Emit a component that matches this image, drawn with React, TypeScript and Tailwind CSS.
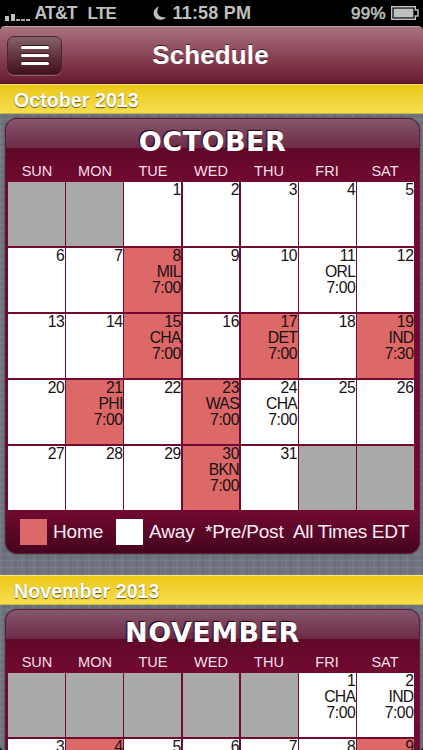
import clsx from "clsx";

type Cell = {
  day?: number;
  team?: string;
  time?: string;
  home?: boolean;
};

type Month = {
  label: string;
  title: string;
  cells: Cell[];
};

const WEEKDAYS = ["SUN", "MON", "TUE", "WED", "THU", "FRI", "SAT"];

const buildCells = (
  offset: number,
  days: number,
  games: Record<number, Omit<Cell, "day">>,
  weeks: number,
): Cell[] =>
  Array.from({ length: weeks * 7 }, (_, i) => {
    const day = i - offset + 1;
    return day < 1 || day > days ? {} : { day, ...games[day] };
  });

const MONTHS: Month[] = [
  {
    label: "October 2013",
    title: "OCTOBER",
    cells: buildCells(
      2,
      31,
      {
        8: { team: "MIL", time: "7:00", home: true },
        11: { team: "ORL", time: "7:00" },
        15: { team: "CHA", time: "7:00", home: true },
        17: { team: "DET", time: "7:00", home: true },
        19: { team: "IND", time: "7:30", home: true },
        21: { team: "PHI", time: "7:00", home: true },
        23: { team: "WAS", time: "7:00", home: true },
        24: { team: "CHA", time: "7:00" },
        30: { team: "BKN", time: "7:00", home: true },
      },
      5,
    ),
  },
  {
    label: "November 2013",
    title: "NOVEMBER",
    // only the first two weeks reach the screen
    cells: buildCells(
      5,
      30,
      {
        1: { team: "CHA", time: "7:00" },
        2: { team: "IND", time: "7:00" },
        4: { home: true },
        9: { home: true },
      },
      2,
    ),
  },
];

function StatusBar() {
  return (
    <div className="flex h-[26px] shrink-0 items-center bg-black pt-px text-[18px] leading-[25px] font-bold text-[#bfbfbf]">
      <div className="mb-[-3px] ml-[5px] flex h-[14px] items-end gap-[1.5px] pb-[1px]">
        <span className="h-[5px] w-[4px] bg-[#bfbfbf]" />
        <span className="h-[7px] w-[4px] bg-[#bfbfbf]" />
        <span className="h-[2px] w-[3.5px] bg-[#a8a8a8]" />
        <span className="h-[2px] w-[3.5px] bg-[#a8a8a8]" />
        <span className="h-[2px] w-[3.5px] bg-[#a8a8a8]" />
      </div>
      <span className="ml-[5px] w-[53px] text-[17.5px] tracking-[-0.8px]">AT&amp;T</span>
      <span className="w-[29px] text-[17px] tracking-[-0.7px]">LTE</span>
      <svg className="ml-[36px]" width="15" height="15" viewBox="0 0 15 15">
        <path d="M6 .5C1.5 2-.5 6 1.2 10c1.7 4 7.500 5.500 12.300 1.200C9 12 5.500 10.500 4.600 7.300 4 5 4.600 2.300 6 .5Z" fill="#bfbfbf" />
      </svg>
      <span className="ml-[5px] tracking-[0.2px] whitespace-nowrap">11:58 PM</span>
      <span className="mr-[5px] ml-auto text-[17px] font-normal tracking-[0.3px] [-webkit-text-stroke:0.6px_#bfbfbf]">99%</span>
      <svg className="mr-[4px] mb-[2px]" width="28" height="14" viewBox="0 0 28 14">
        <path d="M.7.7h23.600v3.300h2.700v6h-2.700v3.300H.7Z" fill="none" stroke="#bfbfbf" strokeWidth="1.400" />
        <rect x="2.600" y="2.600" width="19.800" height="8.800" fill="#bfbfbf" />
      </svg>
    </div>
  );
}

function NavBar() {
  return (
    <header className="relative flex h-[58px] shrink-0 items-start justify-center rounded-t-[5px] border-t border-b border-t-[#bba0aa] border-b-[#4a1426] bg-linear-to-b from-[#a9717f] to-[#68182f]">
      <button
        type="button"
        aria-label="Menu"
        className="absolute top-[9px] left-[7px] flex h-[39px] w-[55px] flex-col items-center justify-center gap-[5px] rounded-[7px] border border-[#4c2430] bg-linear-to-b from-[#83636b] via-[#63353f] to-[#411020] shadow-[0_1px_0_rgba(255,255,255,0.25)]"
      >
        <span className="h-[3px] w-[28px] rounded-full bg-white shadow-[0_-1px_0_#3a1620]" />
        <span className="h-[3px] w-[28px] rounded-full bg-white shadow-[0_-1px_0_#3a1620]" />
        <span className="h-[3px] w-[28px] rounded-full bg-white shadow-[0_-1px_0_#3a1620]" />
      </button>
      <h1 className="mr-[2px] text-[26px] leading-[57px] font-bold tracking-[0.1px] text-white [text-shadow:0_-1px_0_#4a1a28]">
        Schedule
      </h1>
    </header>
  );
}

function DayCell({ cell }: { cell: Cell }) {
  return (
    <div
      className={clsx(
        "h-[64px] pr-[0.5px] text-right text-[15.75px] leading-[16px] tracking-[-0.45px] text-[#171214]",
        !cell.day ? "bg-[#a9a9a9]" : cell.home ? "bg-[#dc6868]" : "bg-white",
      )}
    >
      <div className="-mt-[0.5px]">{cell.day}</div>
      <div className="tracking-[-0.7px]">{cell.team}</div>
      <div>{cell.time}</div>
    </div>
  );
}

function MonthCard({ month }: { month: Month }) {
  return (
    <section className="mr-[3px] ml-[5px] overflow-hidden rounded-[12px] border border-[#5d1c38] bg-[#720930] shadow-[0_0_2px_rgba(40,20,30,0.6)]">
      <div className="h-[63px] bg-[linear-gradient(to_bottom,#85576c_0px,#6d2a47_29px,#5f0828_29.500px,#720930_63px)] text-center">
        <h2 className="pt-[6px] font-['DejaVu_Sans',Verdana,sans-serif] text-[27px] leading-[34px] font-bold tracking-[0.5px] text-white [text-shadow:-1px_-1px_1px_#21000f]">
          {month.title}
        </h2>
        <div className="mr-[5px] ml-[2px] grid grid-cols-7 pt-[4px] text-[14.5px] leading-[16px] text-[#f8dfe9]">
          {WEEKDAYS.map((name) => (
            <span key={name}>{name}</span>
          ))}
        </div>
      </div>
      <div className="mr-[5px] ml-[2px] grid grid-cols-7 gap-x-[1.250px] gap-y-[2px]">
        {month.cells.map((cell, i) => (
          <DayCell key={i} cell={cell} />
        ))}
      </div>
      <div className="flex h-[43px] items-center bg-linear-to-b from-[#720930] to-[#45051f] pl-[14px] text-[19px] tracking-[-0.1px] whitespace-nowrap text-[#fdebf3]">
        <span className="h-[26px] w-[27px] bg-[#dc6868]" />
        <span className="ml-[6px] w-[63px] pt-[2px]">Home</span>
        <span className="h-[26px] w-[27px] bg-white" />
        <span className="ml-[6px] w-[56px] pt-[2px]">Away</span>
        <span className="w-[88px] pt-[2px] tracking-[-0.2px]">*Pre/Post</span>
        <span className="pt-[2px] tracking-[-0.35px]">All Times EDT</span>
      </div>
    </section>
  );
}

function MonthHeader({ label }: { label: string }) {
  return (
    <div className="h-[30px] border-t border-b border-t-[#f7e488] border-b-[#cdb63e] bg-linear-to-b from-[#ebc70f] to-[#f6df4c] pl-[14px] text-[19.5px] leading-[31px] font-bold tracking-[0.1px] text-white [text-shadow:0_1px_1px_#665414]">
      {label}
    </div>
  );
}

export default function App() {
  return (
    <div className="flex h-[750px] w-[423px] flex-col overflow-hidden bg-black font-['Liberation_Sans',Arial,sans-serif]">
      <StatusBar />
      <NavBar />
      <main className="min-h-0 flex-1 overflow-hidden rounded-b-[4px] bg-[#6f747e] bg-[repeating-linear-gradient(90deg,rgba(255,255,255,0.06)_0_1px,transparent_1px_4px,rgba(0,0,0,0.05)_4px_6px,transparent_6px_11px),repeating-linear-gradient(0deg,rgba(255,255,255,0.06)_0_1px,transparent_1px_3px,rgba(0,0,0,0.05)_3px_4px,transparent_4px_7px)]">
        {MONTHS.map((month) => (
          <div key={month.label} className="mb-[21px]">
            <MonthHeader label={month.label} />
            <div className="pt-[4px]">
              <MonthCard month={month} />
            </div>
          </div>
        ))}
      </main>
    </div>
  );
}
